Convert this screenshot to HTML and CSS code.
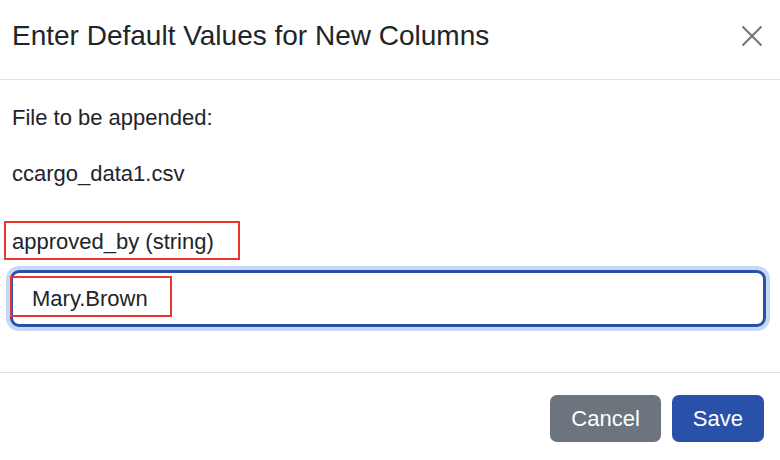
FILE: index.html
```html
<!DOCTYPE html>
<html lang="en">
<head>
<meta charset="utf-8">
<title>Enter Default Values for New Columns</title>
<link rel="stylesheet" href="styles.css">
</head>
<body>
<div class="modal">
  <div class="modal-header">
    <h1 class="modal-title">Enter Default Values for New Columns</h1>
    <button class="close" aria-label="Close">
      <svg width="24" height="24" viewBox="0 0 24 24"><path d="M2.5 2.5 L21.5 21.5 M21.5 2.5 L2.5 21.5" stroke="#777" stroke-width="2.2" fill="none"/></svg>
    </button>
  </div>
  <div class="modal-body">
    <p class="line">File to be appended:</p>
    <p class="line file">ccargo_data1.csv</p>
    <div class="field-label">approved_by (string)<span class="annot annot-label"></span></div>
    <div class="input-wrap">
      <div class="input">Mary.Brown</div>
      <span class="annot annot-input"></span>
    </div>
  </div>
  <div class="modal-footer">
    <button class="btn btn-cancel">Cancel</button>
    <button class="btn btn-save">Save</button>
  </div>
</div>
</body>
</html>
```

FILE: styles.css
```css
* { box-sizing: border-box; }
html, body { margin: 0; padding: 0; background: #fff; }
body {
  font-family: "Liberation Sans", Arial, Helvetica, sans-serif;
  color: #212529;
  width: 780px;
  height: 460px;
  overflow: hidden;
}
.modal { width: 780px; }
.modal-header {
  height: 80px;
  border-bottom: 1px solid #dee2e6;
  display: flex;
  justify-content: space-between;
  align-items: flex-start;
  padding: 19px 16px 0 12px;
}
.modal-title {
  margin: 0;
  font-size: 28px;
  font-weight: normal;
  line-height: 34px;
  color: #212529;
}
.close {
  border: 0;
  background: transparent;
  padding: 0;
  margin-top: 5px;
  width: 24px;
  height: 24px;
  display: flex;
}
.modal-body {
  padding: 21px 14px 45px 10px;
  font-size: 22px;
  line-height: 33px;
}
.line { margin: 0 0 23px 2px; }
.file { margin-bottom: 35px; }
.field-label {
  position: relative;
  margin-left: 2px;
  margin-bottom: 12px;
}
.annot {
  position: absolute;
  border: 2px solid #e8372c;
}
.annot-label { left: -8px; top: -4px; width: 236px; height: 39px; }
.input-wrap { position: relative; }
.input {
  height: 57px;
  border: 3px solid #2a51a7;
  border-radius: 9px;
  box-shadow: 0 0 0 4px #c5d8f6;
  padding: 0 19px;
  display: flex;
  align-items: center;
  line-height: 33px;
}
.annot-input { left: 0; top: 6px; width: 162px; height: 41px; }
.modal-footer {
  border-top: 1px solid #dee2e6;
  display: flex;
  justify-content: flex-end;
  gap: 11px;
  padding: 22px 16px 0 0;
}
.btn {
  font-family: "Liberation Sans", Arial, Helvetica, sans-serif;
  font-size: 22px;
  color: #fff;
  border: 0;
  border-radius: 7px;
  height: 47px;
  padding: 0 21px;
}
.btn-cancel { background: #6c757d; }
.btn-save { background: #2a51a9; }
```
